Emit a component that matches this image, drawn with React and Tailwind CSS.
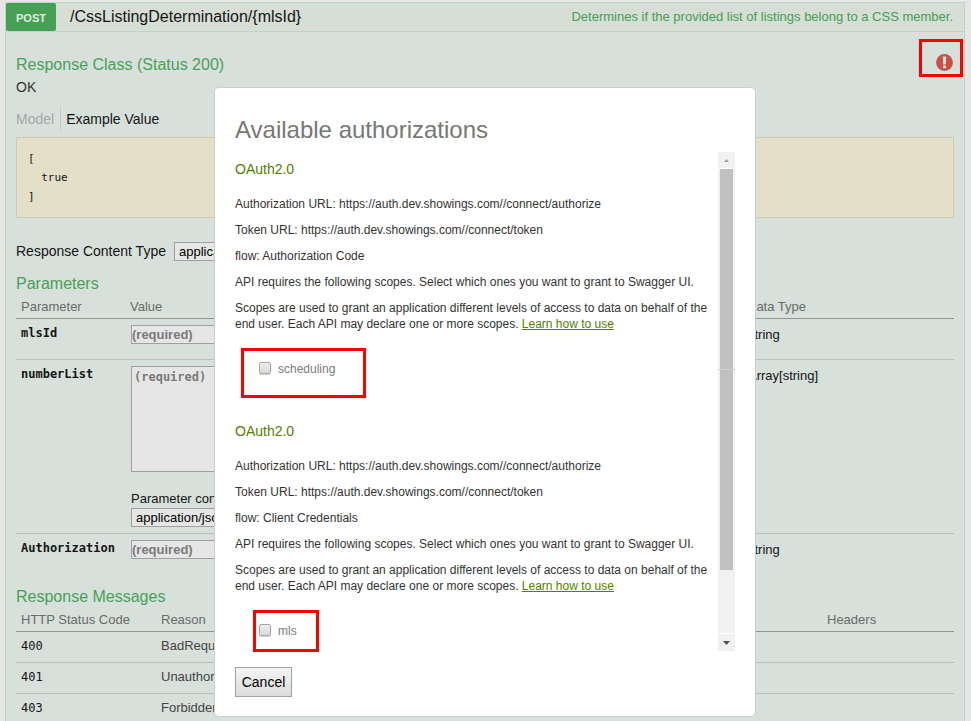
import React from "react";

const CODE = "font-['DejaVu_Sans_Mono',monospace]";

const authorizations = [
  { flow: "Authorization Code", scope: "scheduling", mark: "-left-[18px] -top-3 w-[125px] h-[50px]" },
  { flow: "Client Credentials", scope: "mls", mark: "-left-1.5 -top-3 w-[66px] h-[42px]" },
];

const responses = [
  { code: "400", reason: "BadRequest" },
  { code: "401", reason: "Unauthorized" },
  { code: "403", reason: "Forbidden" },
];

function Heading({ children }) {
  return <h4 className="text-[16px] leading-5 text-[#4b9f5a]">{children}</h4>;
}

function Highlight({ className }) {
  return <span aria-hidden="true" className={`pointer-events-none absolute border-3 border-[#fe0000] ${className}`} />;
}

function ContentTypeSelect({ id, label, className }) {
  return (
    <select
      id={id}
      aria-label={label}
      className={`h-[19px] appearance-none border border-[#a0a0a0] bg-[#e6e6e6] px-1 text-[13px] leading-4 text-black ${className}`}
    >
      <option>application/json</option>
      <option>text/json</option>
    </select>
  );
}

function Th({ children }) {
  return (
    <th className="border-b border-[#8f9592] px-[5px] pb-px text-left text-[13px] leading-5 font-normal text-[#686c6a]">
      {children}
    </th>
  );
}

function ParameterRow({ name, type, height, last, children }) {
  const line = last ? "" : "border-b border-[#b9bfbc]";
  return (
    <tr className={`align-top ${height}`}>
      <td className={`px-[5px] pt-[5px] ${line}`}>
        <label htmlFor={name} className={`${CODE} block text-[12px] leading-[18px] font-bold text-[#151515]`}>
          {name}
        </label>
      </td>
      <td className={`px-1.5 pt-1.5 ${line}`}>{children}</td>
      <td className={line} />
      <td className={`px-1.5 pt-1.5 text-[13px] leading-5 ${line}`}>{type}</td>
    </tr>
  );
}

function RequiredInput({ id }) {
  return (
    <input
      id={id}
      placeholder="(required)"
      className="block h-[19px] w-[200px] border border-[#a0a0a0] bg-[#e6e6e6] text-[13px] font-bold placeholder:text-[#7a7a7a]"
    />
  );
}

function Operation() {
  return (
    <section className="mr-1.5 ml-[5px] border border-[#bbd6c4] bg-[#d7e0db]">
      <header className="flex h-[29px] items-center border-b border-[#bbd6c4] bg-[#d6ded6]">
        <button className="h-7 w-[50px] rounded-[2px] bg-[#459f55] pt-0.5 text-[11px] font-bold text-[#e0ece2]">POST</button>
        <a href="#operation" className="ml-3.5 text-[16px] leading-5 text-[#151515]">
          /CssListingDetermination/&#123;mlsId&#125;
        </a>
        <a href="#summary" className="mr-[11px] ml-auto text-[13px] leading-5 text-[#459f55]">
          Determines if the provided list of listings belong to a CSS member.
        </a>
      </header>

      <div className="px-2.5 pt-[23px]">
        <div className="relative">
          <Heading>Response Class (Status 200)</Heading>
          <button aria-label="Authorize" className="absolute -top-px right-px size-[17px]">
            <svg viewBox="0 0 17 17" className="block size-[17px]">
              <circle cx="8.5" cy="8.5" r="8.4" fill="#c75148" />
              <path d="M6.800 2.600h3.400l-.4 7.800H7.200z" fill="#e4dedb" />
              <rect x="7" y="11.400" width="3" height="2.900" rx=".6" fill="#e4dedb" />
            </svg>
          </button>
          <Highlight className="-top-4 -right-[9px] h-[38px] w-[44px]" />
        </div>
        <p className="mt-0.5 text-[14px] leading-5 text-[#333]">OK</p>

        <div className="mt-2.5 flex text-[14px] leading-6">
          <a href="#model" className="border-r border-[#c4c9c6] pr-1.5 text-[#a5a9a7]">Model</a>
          <a href="#example" className="pl-[5px] text-[#151515]">Example Value</a>
        </div>
        <pre className={`${CODE} mt-1.5 h-[81px] border border-[#cfcab4] bg-[#e4dfc8] px-[11px] py-[11px] text-[11px] leading-[19px]`}>
          {"[\n  true\n]"}
        </pre>

        <div className="mt-6 flex items-center text-[14px] leading-[19px]">
          <label htmlFor="responseType">Response Content Type</label>
          <ContentTypeSelect id="responseType" className="ml-2 w-[140px]" />
        </div>

        <div className="mt-[13px]">
          <Heading>Parameters</Heading>
        </div>
        <table className="mt-[3px] w-full table-fixed border-collapse">
          <colgroup>
            <col className="w-[109px]" />
            <col className="w-[310px]" />
            <col />
            <col className="w-[212px]" />
          </colgroup>
          <thead>
            <tr>
              <Th>Parameter</Th>
              <Th>Value</Th>
              <Th />
              <Th>Data Type</Th>
            </tr>
          </thead>
          <tbody>
            <ParameterRow name="mlsId" type="string" height="h-[41px]">
              <RequiredInput id="mlsId" />
            </ParameterRow>
            <ParameterRow name="numberList" type="Array[string]" height="h-[174px]">
              <textarea
                id="numberList"
                placeholder="(required)"
                className={`${CODE} block h-[106px] w-[280px] resize-none border border-[#a0a0a0] bg-[#e6e6e6] px-0.5 py-0.5 text-[12px] leading-4 font-bold placeholder:text-[#7a7a7a]`}
              />
              <p className="mt-[18px] text-[13px] leading-[18px]">Parameter content type:</p>
              <ContentTypeSelect label="Parameter content type" className="block w-[140px]" />
            </ParameterRow>
            <ParameterRow name="Authorization" type="string" height="h-[40px]" last>
              <RequiredInput id="Authorization" />
            </ParameterRow>
          </tbody>
        </table>

        <div className="mt-[13px]">
          <Heading>Response Messages</Heading>
        </div>
        <table className="mt-[3px] w-full table-fixed border-collapse">
          <colgroup>
            <col className="w-[140px]" />
            <col className="w-[310px]" />
            <col />
            <col className="w-[132px]" />
          </colgroup>
          <thead>
            <tr>
              <Th>HTTP Status Code</Th>
              <Th>Reason</Th>
              <Th />
              <Th>Headers</Th>
            </tr>
          </thead>
          <tbody>
            {responses.map((r) => (
              <tr key={r.code} className="h-[31px] border-b border-[#b9bfbc] text-[13px]">
                <td className={`${CODE} px-[5px] pb-0.5 text-[12px] text-[#151515]`}>{r.code}</td>
                <td className="px-[5px] pb-0.5 text-[#444]">{r.reason}</td>
                <td />
                <td />
              </tr>
            ))}
          </tbody>
        </table>
      </div>
    </section>
  );
}

function Authorization({ flow, scope, mark }) {
  return (
    <section className="pt-2 pb-[37px] text-[12px] leading-4 text-[#333] last:pb-0">
      <h3 className="mb-[18px] text-[14px] leading-[18px] text-[#547f00]">OAuth2.0</h3>
      <div className="flex flex-col gap-2.5">
        <p>Authorization URL: https://auth.dev.showings.com//connect/authorize</p>
        <p>Token URL: https://auth.dev.showings.com//connect/token</p>
        <p>flow: {flow}</p>
        <p>API requires the following scopes. Select which ones you want to grant to Swagger UI.</p>
        <p>
          Scopes are used to grant an application different levels of access to data on behalf of the end user. Each API
          may declare one or more scopes.{" "}
          <a href="#learn" className="text-[#547f00] underline">Learn how to use</a>
        </p>
      </div>
      <div className="relative mt-7 ml-6 flex items-start">
        <input
          type="checkbox"
          id={scope}
          className="mt-0.5 size-3 appearance-none rounded-[2px] border border-[#a9a9a9] bg-linear-to-b from-[#ededed] to-[#dadada] shadow-[0_1px_1px_#d0d0d0]"
        />
        <label htmlFor={scope} className="ml-[7px] pt-px text-[#7b7b7b]">{scope}</label>
        <Highlight className={mark} />
      </div>
    </section>
  );
}

function Scrollbar() {
  return (
    <div aria-hidden="true" className="flex w-[17px] flex-col bg-[#f1f1f1]">
      <div className="flex h-[17px] items-center justify-center border-b border-white">
        <svg viewBox="0 0 5 3" className="h-[3px] w-[5px]"><path d="M0 3 2.500 0 5 3z" fill="#a3a3a3" /></svg>
      </div>
      <div className="mx-0.5 h-[200px] bg-[#c1c1c1]" />
      <div className="h-px bg-[#d3d3d3]" />
      <div className="mx-0.5 h-[200px] bg-[#c1c1c1]" />
      <div className="mt-auto flex h-[18px] items-center justify-center border-t border-white">
        <svg viewBox="0 0 7 4" className="h-1 w-[7px]"><path d="M0 0h7L3.500 4z" fill="#505050" /></svg>
      </div>
    </div>
  );
}

function AuthorizationDialog() {
  return (
    <div className="absolute inset-x-0 top-[87px] flex justify-center pr-px">
      <div role="dialog" aria-labelledby="dialogTitle" className="w-[542px] rounded-[5px] border border-[#cfcfcf] bg-white px-5 pt-7 pb-[19px]">
        <h2 id="dialogTitle" className="text-[24px] leading-7 text-[#777]">Available authorizations</h2>
        <div className="mt-2 flex h-[499px]">
          <div className="min-w-0 flex-1 pr-1.5">
            {authorizations.map((a) => (
              <Authorization key={a.scope} {...a} />
            ))}
          </div>
          <Scrollbar />
        </div>
        <button className="mt-4 block h-[30px] w-[57px] border border-[#a0a0a0] bg-linear-to-b from-[#f5f5f5] to-[#dcdcdc] text-[14px] leading-5 text-black">
          Cancel
        </button>
      </div>
    </div>
  );
}

export default function App() {
  return (
    <main className="relative h-screen overflow-hidden bg-[#e6e6e6] pt-0.5 font-['Liberation_Sans',Arial,sans-serif] text-[#151515]">
      <Operation />
      <AuthorizationDialog />
    </main>
  );
}
